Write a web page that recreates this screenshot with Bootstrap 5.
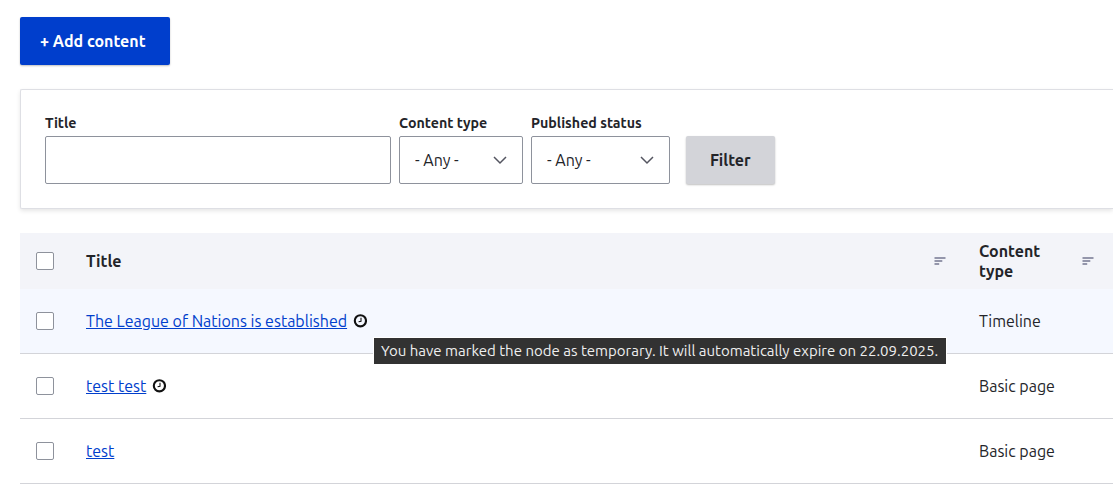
<!DOCTYPE html>
<html lang="en">
<head>
<meta charset="utf-8">
<meta name="viewport" content="width=device-width, initial-scale=1">
<title>Content</title>
<link href="https://cdn.jsdelivr.net/npm/bootstrap@5.3.0/dist/css/bootstrap.min.css" rel="stylesheet">
<style>
  body { font-family: Ubuntu, "Noto Sans", sans-serif; font-size: 16px; line-height: 20px; color: #232429; overflow: hidden; }
  .page { padding: 17px 0 0 20px; }
  .btn { --bs-btn-font-weight: 700; --bs-btn-border-radius: 2px; --bs-btn-border-width: 0; --bs-btn-line-height: 16px; --bs-btn-font-size: 16px; box-shadow: 0 1px 2px rgba(0,0,0,.25); }
  .btn-add { --bs-btn-bg: #003ecc; --bs-btn-color: #fff; width: 150px; height: 48px; padding: 0 4.4px 0 0; }
  .btn-filter { --bs-btn-bg: #d3d4d9; --bs-btn-color: #232429; width: 89px; height: 48px; padding: 0 .5px 0 0; margin: 22px 0 0 8px; }
  .filters { border: 1px solid #dedfe4; border-radius: 2px 0 0 2px; border-right: 0; box-shadow: 0 2px 4px rgba(0,0,0,.1); height: 120px; padding: 24px; margin-top: 24px; }
  .form-label { font-size: 14.22px; line-height: 18px; font-weight: 700; margin: 0 0 4px; display: block; white-space: nowrap; }
  .form-control, .form-select { height: 48px; border: 1px solid #8e929c; border-radius: 2px; color: #232429; font-size: 16px; }
  .form-select { padding: 0 32px 0 15px; background-size: 14px 10px; background-position: right 15px center; background-image: url("data:image/svg+xml,%3Csvg xmlns='http://www.w3.org/2000/svg' viewBox='0 0 14 10'%3E%3Cpath fill='none' stroke='%23545560' stroke-width='1.5' d='M1 2l6 6 6-6'/%3E%3C/svg%3E"); }
  .f-title { width: 346px; } .f-type { width: 124px; } .f-status { width: 139px; }
  .content-table { margin: 24px 0 0; table-layout: fixed; width: 1093px; --bs-table-bg: transparent; --bs-table-color: #232429; color: #232429; }
  .content-table > :not(caption) > * > * { padding: 0 16px; vertical-align: middle; border-bottom: 1px solid #d3d4d9; }
  .content-table > thead > tr > th { height: 56px; border: 0; background: #f3f4f9; }
  .content-table > tbody > tr > td { height: 65px; }
  .content-table > tbody > tr:first-child > td { background: #f5f8ff; height: 64px; }
  .content-table .col-check { width: 50px; } .content-table .col-title { width: 893px; } .content-table .col-type { width: 150px; }
  .content-table a { color: #003ecc; }
  .form-check-input { display: block; width: 18px; height: 18px; margin: 0; border: 1px solid #8e929c; }
  .form-check-input[type=checkbox] { border-radius: 2px; }
  .clock { width: 14px; height: 14px; margin-left: 6px; display: block; }
  .content-table .col-type .sort { margin-right: 3px; }
  .sort { margin-right: 1px; }
  .tip { position: absolute; left: 288px; top: 27px; width: 572px; height: 26px; background: #323232; color: #efefef; font-size: 15px; line-height: 26px; padding-left: 7px; white-space: nowrap; z-index: 2; box-shadow: 0 0 0 1px #fff; }
</style>
</head>
<body class="bg-white">
<main class="page">
  <button class="btn btn-add d-block" type="button">+ Add content</button>
  <form class="filters d-flex align-items-start gap-2">
    <div class="f-title"><label class="form-label" for="title">Title</label><input id="title" class="form-control" type="text"></div>
    <div class="f-type"><label class="form-label" for="type">Content type</label><select id="type" class="form-select"><option>- Any -</option></select></div>
    <div class="f-status"><label class="form-label" for="status">Published status</label><select id="status" class="form-select"><option>- Any -</option></select></div>
    <button class="btn btn-filter" type="button">Filter</button>
  </form>
  <table class="table content-table">
    <thead><tr>
      <th class="col-check"><input class="form-check-input" type="checkbox" aria-label="Select all"></th>
      <th class="col-title"><div class="d-flex justify-content-between align-items-center"><span>Title</span>
        <svg class="sort" width="13" height="10" viewBox="0 0 13 10" fill="#9496ab"><path d="M1.5 1h11v2h-11zM1.5 4h7.8v2H1.5zM1.5 7h4.7v2H1.5z"/></svg></div></th>
      <th class="col-type"><div class="d-flex justify-content-between align-items-center"><span>Content<br>type</span>
        <svg class="sort" width="13" height="10" viewBox="0 0 13 10" fill="#9496ab"><path d="M1.5 1h11v2h-11zM1.5 4h7.8v2H1.5zM1.5 7h4.7v2H1.5z"/></svg></div></th>
    </tr></thead>
    <tbody>
      <tr><td><input class="form-check-input" type="checkbox" aria-label="Select row"></td>
        <td><div class="d-flex align-items-center position-relative"><a href="#">The League of Nations is established</a>
          <svg class="clock" viewBox="0 0 14 14" fill="none" stroke="#111"><circle cx="7.4" cy="6.8" r="5.6" stroke-width="2.1"/><path d="M8 3.7v3.6L5.6 7.8" stroke-width="1.1"/></svg>
          <div class="tip">You have marked the node as temporary. It will automatically expire on 22.09.2025.</div></div></td>
        <td>Timeline</td></tr>
      <tr><td><input class="form-check-input" type="checkbox" aria-label="Select row"></td>
        <td><div class="d-flex align-items-center"><a href="#">test test</a>
          <svg class="clock" viewBox="0 0 14 14" fill="none" stroke="#111"><circle cx="7.4" cy="6.8" r="5.6" stroke-width="2.1"/><path d="M8 3.7v3.6L5.6 7.8" stroke-width="1.1"/></svg></div></td>
        <td>Basic page</td></tr>
      <tr><td><input class="form-check-input" type="checkbox" aria-label="Select row"></td>
        <td><a href="#">test</a></td><td>Basic page</td></tr>
    </tbody>
  </table>
</main>
<script src="https://cdn.jsdelivr.net/npm/bootstrap@5.3.0/dist/js/bootstrap.bundle.min.js"></script>
</body>
</html>
